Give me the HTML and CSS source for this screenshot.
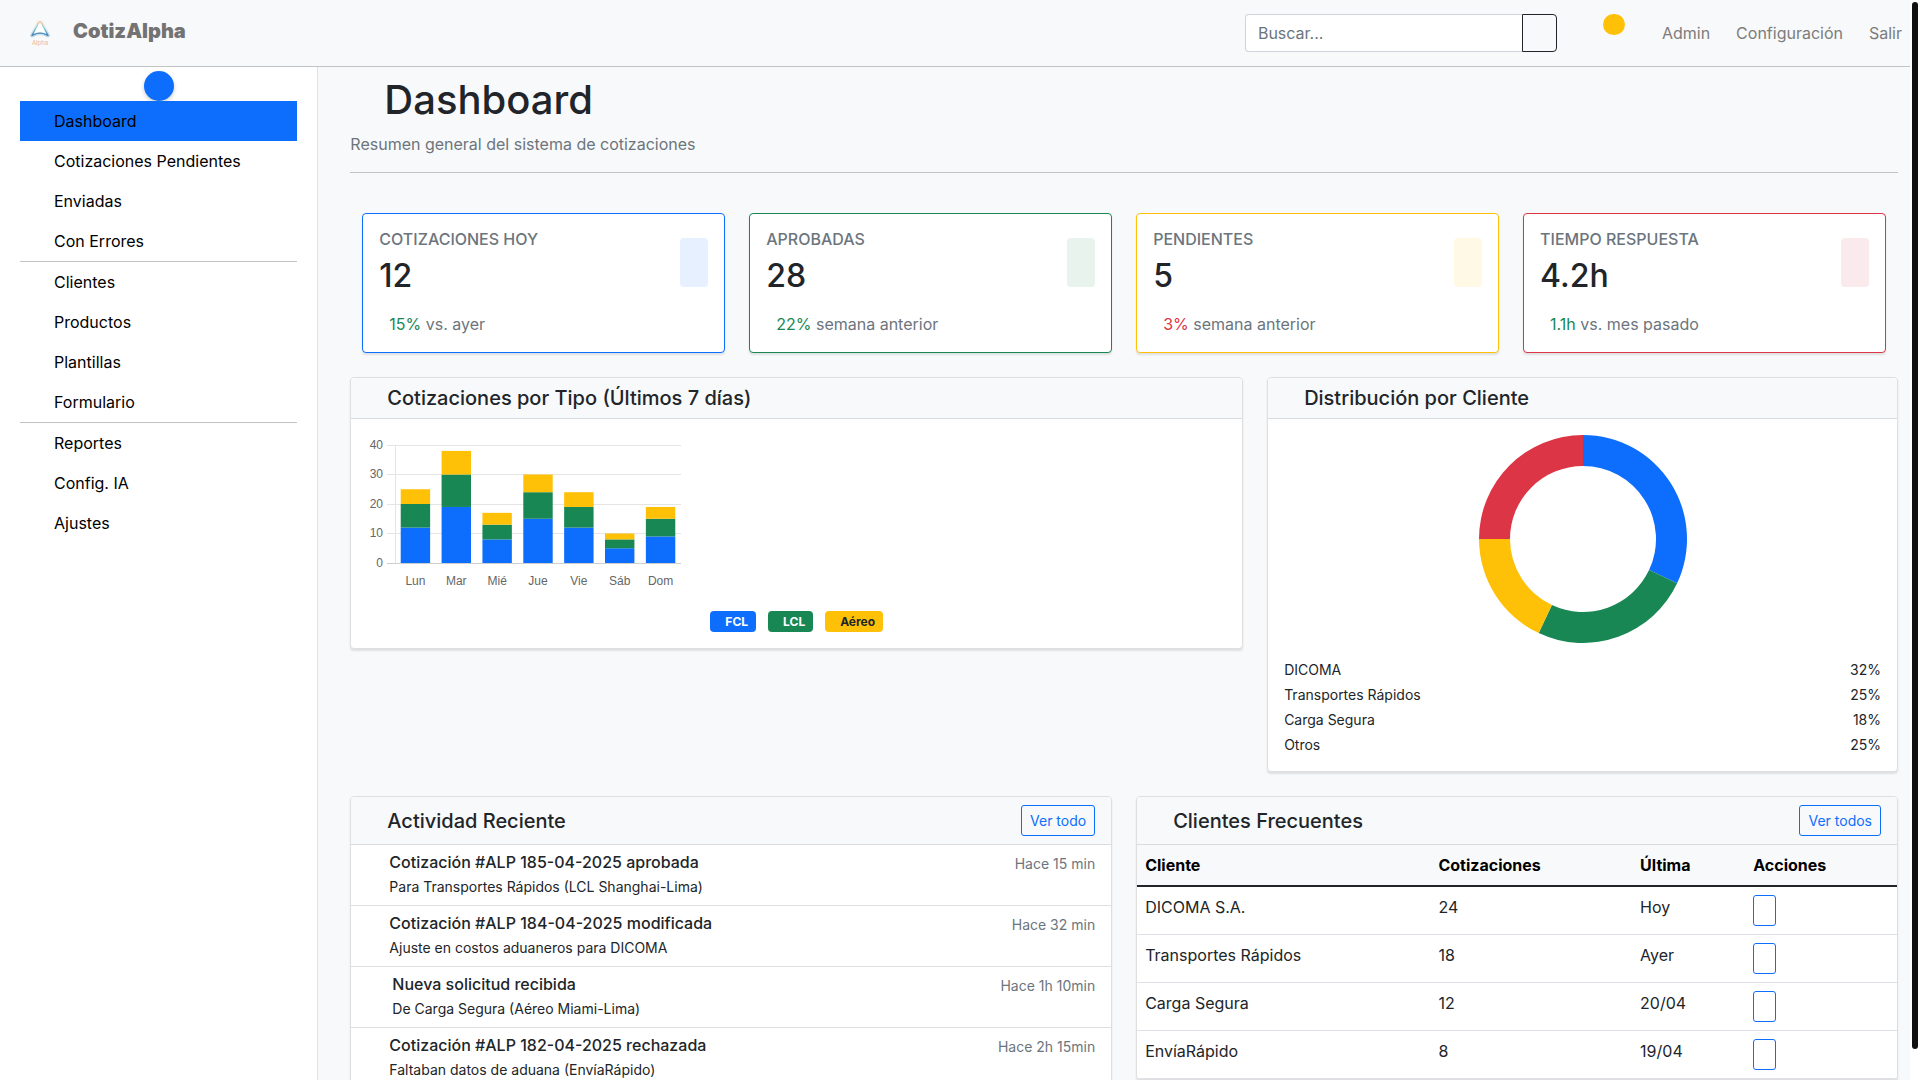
FILE: index.html
```html
<!DOCTYPE html>
<html lang="es">

<head>
    <meta charset="UTF-8">
    <meta name="viewport" content="width=device-width, initial-scale=1.0">
    <title>CotizAlpha - Dashboard</title>
    <link rel="stylesheet" href="styles.css">
</head>

<body>
    <header class="navbar">
        <a class="brand" href="#">
            <svg class="brand-logo" viewBox="0 0 40 40" aria-hidden="true">
                <defs>
                    <linearGradient id="logoGradient" x1="0" y1="0" x2="0" y2="1">
                        <stop offset="0" stop-color="#f6c9a4" />
                        <stop offset="0.45" stop-color="#8ccbd8" />
                        <stop offset="1" stop-color="#3f7fb5" />
                    </linearGradient>
                </defs>
                <path d="M20 9 Q18.500 9 17.500 12 L12 22.500 Q16 20 20 20 Q24 20 28 22.500 L22.500 12 Q21.500 9 20 9 Z" fill="#fff" stroke="url(#logoGradient)" stroke-width="4" stroke-opacity="0.250" stroke-linejoin="round" />
                <path d="M20 9 Q18.500 9 17.500 12 L12 22.500 Q16 20 20 20 Q24 20 28 22.500 L22.500 12 Q21.500 9 20 9 Z" fill="#fff" stroke="url(#logoGradient)" stroke-width="1.400" stroke-linejoin="round" />
                <text x="20" y="32" text-anchor="middle" class="logo-text">Alpha</text>
            </svg>
            <span>CotizAlpha</span>
        </a>
        <div class="navbar-right">
            <form class="search" onsubmit="return false">
                <input type="search" placeholder="Buscar..." aria-label="Buscar">
                <button type="submit" aria-label="Buscar"></button>
            </form>
            <span class="notification-badge"></span>
            <nav class="navbar-links">
                <a href="#">Admin</a>
                <a href="#">Configuración</a>
                <a href="#">Salir</a>
            </nav>
        </div>
    </header>

    <div class="layout">
        <aside class="sidebar">
            <button class="sidebar-toggle" type="button" aria-label="Menú"></button>
            <nav class="menu">
                <a class="active" href="#">Dashboard</a>
                <a href="#">Cotizaciones Pendientes</a>
                <a href="#">Enviadas</a>
                <a href="#">Con Errores</a>
                <hr>
                <a href="#">Clientes</a>
                <a href="#">Productos</a>
                <a href="#">Plantillas</a>
                <a href="#">Formulario</a>
                <hr>
                <a href="#">Reportes</a>
                <a href="#">Config. IA</a>
                <a href="#">Ajustes</a>
            </nav>
        </aside>

        <main class="content">
            <h1>Dashboard</h1>
            <p class="subtitle">Resumen general del sistema de cotizaciones</p>
            <hr>

            <!-- Indicadores -->
            <section class="stats">
                <div class="card stat primary">
                    <div class="stat-top">
                        <div>
                            <h6>Cotizaciones Hoy</h6>
                            <h2>12</h2>
                        </div>
                        <span class="stat-icon"></span>
                    </div>
                    <p><span class="up">15%</span> vs. ayer</p>
                </div>
                <div class="card stat success">
                    <div class="stat-top">
                        <div>
                            <h6>Aprobadas</h6>
                            <h2>28</h2>
                        </div>
                        <span class="stat-icon"></span>
                    </div>
                    <p><span class="up">22%</span> semana anterior</p>
                </div>
                <div class="card stat warning">
                    <div class="stat-top">
                        <div>
                            <h6>Pendientes</h6>
                            <h2>5</h2>
                        </div>
                        <span class="stat-icon"></span>
                    </div>
                    <p><span class="down">3%</span> semana anterior</p>
                </div>
                <div class="card stat danger">
                    <div class="stat-top">
                        <div>
                            <h6>Tiempo Respuesta</h6>
                            <h2>4.2h</h2>
                        </div>
                        <span class="stat-icon"></span>
                    </div>
                    <p><span class="up">1.1h</span> vs. mes pasado</p>
                </div>
            </section>

            <!-- Gráficos -->
            <section class="row charts">
                <div class="card">
                    <div class="card-header">
                        <h5>Cotizaciones por Tipo (Últimos 7 días)</h5>
                    </div>
                    <div class="card-body">
                        <svg class="bar-chart" id="barChart" viewBox="0 0 316 160" role="img" aria-label="Cotizaciones por tipo"></svg>
                        <div class="badges">
                            <span class="badge bg-primary">FCL</span>
                            <span class="badge bg-success">LCL</span>
                            <span class="badge bg-warning">Aéreo</span>
                        </div>
                    </div>
                </div>
                <div class="card">
                    <div class="card-header">
                        <h5>Distribución por Cliente</h5>
                    </div>
                    <div class="card-body">
                        <svg class="donut-chart" id="donutChart" viewBox="0 0 208 208" role="img" aria-label="Distribución por cliente"></svg>
                        <ul class="distribution">
                            <li><span>DICOMA</span><span>32%</span></li>
                            <li><span>Transportes Rápidos</span><span>25%</span></li>
                            <li><span>Carga Segura</span><span>18%</span></li>
                            <li><span>Otros</span><span>25%</span></li>
                        </ul>
                    </div>
                </div>
            </section>

            <section class="row">
                <div class="card">
                    <div class="card-header">
                        <h5>Actividad Reciente</h5>
                        <button class="btn-outline" type="button">Ver todo</button>
                    </div>
                    <ul class="activity">
                        <li>
                            <div class="activity-text">
                                <h6>Cotización #ALP 185-04-2025 aprobada</h6>
                                <p>Para Transportes Rápidos (LCL Shanghai-Lima)</p>
                            </div>
                            <small>Hace 15 min</small>
                        </li>
                        <li>
                            <div class="activity-text">
                                <h6>Cotización #ALP 184-04-2025 modificada</h6>
                                <p>Ajuste en costos aduaneros para DICOMA</p>
                            </div>
                            <small>Hace 32 min</small>
                        </li>
                        <li>
                            <div class="activity-text new">
                                <h6>Nueva solicitud recibida</h6>
                                <p>De Carga Segura (Aéreo Miami-Lima)</p>
                            </div>
                            <small>Hace 1h 10min</small>
                        </li>
                        <li>
                            <div class="activity-text">
                                <h6>Cotización #ALP 182-04-2025 rechazada</h6>
                                <p>Faltaban datos de aduana (EnvíaRápido)</p>
                            </div>
                            <small>Hace 2h 15min</small>
                        </li>
                    </ul>
                </div>
                <div class="card">
                    <div class="card-header">
                        <h5>Clientes Frecuentes</h5>
                        <button class="btn-outline" type="button">Ver todos</button>
                    </div>
                    <table class="clients">
                        <thead>
                            <tr>
                                <th>Cliente</th>
                                <th>Cotizaciones</th>
                                <th>Última</th>
                                <th>Acciones</th>
                            </tr>
                        </thead>
                        <tbody>
                            <tr>
                                <td>DICOMA S.A.</td>
                                <td>24</td>
                                <td>Hoy</td>
                                <td><button class="btn-outline btn-icon" type="button" aria-label="Ver DICOMA S.A."></button></td>
                            </tr>
                            <tr>
                                <td>Transportes Rápidos</td>
                                <td>18</td>
                                <td>Ayer</td>
                                <td><button class="btn-outline btn-icon" type="button" aria-label="Ver Transportes Rápidos"></button></td>
                            </tr>
                            <tr>
                                <td>Carga Segura</td>
                                <td>12</td>
                                <td>20/04</td>
                                <td><button class="btn-outline btn-icon" type="button" aria-label="Ver Carga Segura"></button></td>
                            </tr>
                            <tr>
                                <td>EnvíaRápido</td>
                                <td>8</td>
                                <td>19/04</td>
                                <td><button class="btn-outline btn-icon" type="button" aria-label="Ver EnvíaRápido"></button></td>
                            </tr>
                        </tbody>
                    </table>
                </div>
            </section>
        </main>
    </div>
    <div class="scrollbar"></div>

    <script src="script.js"></script>
</body>

</html>
```

FILE: styles.css
```css
* {
    box-sizing: border-box;
}

body {
    margin: 0;
    height: 100vh;
    overflow: hidden;
    padding-right: 10px;
    display: flex;
    flex-direction: column;
    background-color: #fff;
    color: #212529;
    font-family: Inter, 'Liberation Sans', sans-serif;
    font-size: 16px;
    line-height: 24px;
}

h1, h2, h5, h6, p, ul {
    margin: 0;
    padding: 0;
    font-weight: 500;
}

p {
    font-weight: 400;
}

ul {
    list-style: none;
}

a {
    text-decoration: none;
}

button, input {
    font-family: inherit;
    margin: 0;
}

hr {
    height: 1px;
    margin: 0;
    border: none;
    background-color: #c2c3c4;
}

/* Barra superior */
.navbar {
    display: flex;
    flex: none;
    justify-content: space-between;
    align-items: center;
    height: 67px;
    padding-left: 20px;
    background-color: #f8f9fa;
    border-bottom: 1px solid #c2c3c4;
}

.brand {
    display: flex;
    align-items: center;
    gap: 13px;
    color: #737373;
    font-size: 20px;
    font-weight: 900;
}

.brand span {
    padding-bottom: 4px;
}

.brand-logo {
    width: 40px;
    height: 40px;
}

.logo-text {
    font-size: 6px;
    font-weight: 400;
    fill: #f0b890;
}

.navbar-right {
    display: flex;
    align-items: center;
}

.search {
    display: flex;
}

.search input {
    width: 277px;
    height: 38px;
    padding: 6px 12px;
    font-size: 16px;
    color: #212529;
    background-color: #fff;
    border: 1px solid #ced4da;
    border-right: none;
    border-radius: 4px 0 0 4px;
    outline: none;
    appearance: none;
}

.search input::placeholder {
    color: #6c757d;
}

.search button {
    width: 35px;
    background-color: transparent;
    border: 1px solid #212529;
    border-radius: 0 4px 4px 0;
    cursor: pointer;
}

.notification-badge {
    align-self: flex-start;
    width: 22px;
    height: 21px;
    margin: 1px 29px 0 46px;
    background-color: #ffc107;
    border-radius: 11px;
}

.navbar-links {
    display: flex;
    gap: 10px;
}

.navbar-links a {
    padding: 8px;
    color: #7c7c7d;
}

/* Menú lateral */
.layout {
    display: flex;
    flex: 1;
    min-height: 0;
}

.sidebar {
    flex: none;
    width: calc(100% / 6);
    padding: 4px 20px;
    text-align: center;
    background-color: #fff;
    border-right: 1px solid #dee2e6;
}

.sidebar-toggle {
    display: block;
    width: 30px;
    height: 30px;
    margin: 0 auto;
    background-color: #0d6efd;
    border: none;
    border-radius: 50%;
    box-shadow: 0 2px 4px rgba(0, 0, 0, 0.2);
    cursor: pointer;
}

.menu {
    position: relative;
    text-align: left;
}

.menu a {
    display: block;
    padding: 8px 34px;
    color: #000;
}

.menu a.active {
    background-color: #0d6efd;
}

/* Contenido */
.content {
    flex: 1;
    min-width: 0;
    padding: 9px 12px 24px 32px;
    background-color: #f8f9fa;
}

.content h1 {
    padding-left: 34px;
    font-size: 40px;
    line-height: 48px;
    margin-bottom: 8px;
}

.subtitle {
    color: #6c757d;
    margin-bottom: 16px;
}

.card {
    min-width: 0;
    overflow: hidden;
    background-color: #fff;
    border: 1px solid #dfdfdf;
    border-radius: 4px;
    box-shadow: 0 2px 2px rgba(0, 0, 0, 0.1);
}

.stats {
    display: grid;
    grid-template-columns: repeat(4, 1fr);
    gap: 24px;
    margin: 40px 12px 24px;
}

.stat {
    padding: 16px;
}

.stat-top {
    display: flex;
    justify-content: space-between;
    align-items: center;
    margin-bottom: 18px;
}

.stat h6 {
    margin-bottom: 8px;
    font-size: 16px;
    line-height: 19px;
    color: #6c757d;
    text-transform: uppercase;
}

.stat h2 {
    font-size: 32px;
    line-height: 37px;
}

.stat p {
    padding-left: 10px;
    color: #6c757d;
}

.stat-icon {
    width: 28px;
    height: 49px;
    border-radius: 4px;
}

.primary {
    border-color: #0d6efd;
}

.success {
    border-color: #198754;
}

.warning {
    border-color: #ffc107;
}

.danger {
    border-color: #dc3545;
}

.primary .stat-icon {
    background-color: rgba(13, 110, 253, 0.1);
}

.success .stat-icon {
    background-color: rgba(25, 135, 84, 0.1);
}

.warning .stat-icon {
    background-color: rgba(255, 193, 7, 0.1);
}

.danger .stat-icon {
    background-color: rgba(220, 53, 69, 0.1);
}

.up {
    color: #198754;
}

.down {
    color: #dc3545;
}

.row {
    display: grid;
    grid-template-columns: repeat(12, 1fr);
    column-gap: 24px;
    align-items: start;
    margin-bottom: 24px;
}

.row .card {
    grid-column: span 6;
}

.charts .card:first-child {
    grid-column: span 7;
}

.charts .card:last-child {
    grid-column: span 5;
}

.card-header {
    display: flex;
    justify-content: space-between;
    align-items: center;
    padding: 8px 16px;
    background-color: #f8f9fa;
    border-bottom: 1px solid #dadbdc;
}

.card-header h5 {
    padding-left: 20px;
    font-size: 20px;
}

.card-body {
    padding: 16px;
}

.bar-chart {
    display: block;
    width: 316px;
    height: 160px;
    font-family: 'Liberation Sans', Arial, sans-serif;
    font-size: 12px;
}

.bar-chart text {
    fill: #666;
}

.badges {
    display: flex;
    justify-content: center;
    gap: 12px;
    margin-top: 16px;
}

.badge {
    padding: 5px 8px 4px 15px;
    font-size: 12px;
    font-weight: 700;
    line-height: 12px;
    color: #fff;
    border-radius: 4px;
}

.bg-primary {
    background-color: #0d6efd;
}

.bg-success {
    background-color: #198754;
}

.bg-warning {
    background-color: #ffc107;
    color: #212529;
}

.donut-chart {
    display: block;
    width: 208px;
    height: 208px;
    margin: 0 auto 16px;
}

.distribution {
    display: flex;
    flex-direction: column;
    gap: 4px;
    font-size: 14px;
    line-height: 21px;
}

.distribution li {
    display: flex;
    justify-content: space-between;
    font-weight: 400;
}

.btn-outline {
    padding: 4px 8px;
    font-size: 14px;
    line-height: 21px;
    color: #0d6efd;
    background-color: transparent;
    border: 1px solid #0d6efd;
    border-radius: 3px;
    cursor: pointer;
}

.btn-outline:hover {
    background-color: #0d6efd;
    color: #fff;
}

.btn-icon {
    display: block;
    width: 23px;
    height: 31px;
}

.activity li {
    display: flex;
    justify-content: space-between;
    padding: 8px 16px;
    border-bottom: 1px solid #dfdfdf;
}

.activity-text {
    padding-left: 22px;
}

.activity-text.new {
    padding-left: 25px;
}

.activity h6 {
    margin-bottom: 4px;
    font-size: 16px;
    line-height: 19px;
}

.activity p,
.activity small {
    font-size: 14px;
    font-weight: 400;
    line-height: 21px;
}

.activity small {
    color: #6c757d;
}

.clients {
    width: 100%;
    border-collapse: separate;
    border-spacing: 0;
}

.clients th,
.clients td {
    padding: 8px;
    text-align: left;
    vertical-align: top;
}

.clients th {
    color: #000;
    font-weight: 700;
    background-color: #f8f9fa;
    border-bottom: 2px solid #212529;
}

.clients td {
    border-bottom: 1px solid #dee2e6;
}

.scrollbar {
    position: fixed;
    top: 2px;
    right: 2px;
    bottom: 31px;
    width: 6px;
    background-color: #111;
    border-radius: 3px;
}
```

FILE: script.js
```js
const barChart = document.getElementById("barChart");
const donutChart = document.getElementById("donutChart");
const svgNS = "http://www.w3.org/2000/svg";

const days = ["Lun", "Mar", "Mié", "Jue", "Vie", "Sáb", "Dom"];
const series = [
    { color: "#0d6efd", data: [12, 19, 8, 15, 12, 5, 9] },
    { color: "#198754", data: [8, 11, 5, 9, 7, 3, 6] },
    { color: "#ffc107", data: [5, 8, 4, 6, 5, 2, 4] }
];
const clients = [
    { color: "#0d6efd", percent: 32 },
    { color: "#198754", percent: 25 },
    { color: "#ffc107", percent: 18 },
    { color: "#dc3545", percent: 25 }
];

const area = { left: 28, right: 314, top: 10, bottom: 128 };
const maxValue = 40;

function addShape(chart, name, attributes, text) {
    const shape = document.createElementNS(svgNS, name);
    for (const key in attributes) {
        shape.setAttribute(key, attributes[key]);
    }
    if (text !== undefined) {
        shape.textContent = text;
    }
    chart.appendChild(shape);
}

function yFor(value) {
    return area.bottom - (area.bottom - area.top) * value / maxValue;
}

function drawBarChart() {
    // Grid lines and axis labels
    for (let value = 0; value <= maxValue; value += 10) {
        const y = Math.floor(yFor(value));
        addShape(barChart, "rect", { x: area.left - 8, y: y, width: area.right - area.left + 8, height: 1, fill: value === 0 ? "#cfcfcf" : "#e5e5e5" });
        addShape(barChart, "text", { x: area.left - 12, y: y + 4, "text-anchor": "end" }, value);
    }
    addShape(barChart, "rect", { x: area.left, y: area.top, width: 1, height: area.bottom - area.top, fill: "#e5e5e5" });

    // Stacked bars
    const step = (area.right - area.left) / days.length;
    const barWidth = step * 0.72;
    days.forEach((day, index) => {
        const center = area.left + step * (index + 0.5);
        let total = 0;
        series.forEach(serie => {
            const y = yFor(total + serie.data[index]);
            addShape(barChart, "rect", { x: center - barWidth / 2, y: y, width: barWidth, height: yFor(total) - y, fill: serie.color });
            total += serie.data[index];
        });
        addShape(barChart, "text", { x: center, y: 150, "text-anchor": "middle" }, day);
    });
}

function donutPoint(percent, radius) {
    const angle = percent / 100 * 2 * Math.PI;
    return `${104 + radius * Math.sin(angle)} ${104 - radius * Math.cos(angle)}`;
}

function drawDonutChart() {
    const outer = 104;
    const inner = 73;
    let start = 0;
    clients.forEach(client => {
        const end = start + client.percent;
        const d = `M${donutPoint(start, outer)} A${outer} ${outer} 0 0 1 ${donutPoint(end, outer)}
            L${donutPoint(end, inner)} A${inner} ${inner} 0 0 0 ${donutPoint(start, inner)} Z`;
        addShape(donutChart, "path", { d: d, fill: client.color });
        start = end;
    });
}

drawBarChart();
drawDonutChart();
```
